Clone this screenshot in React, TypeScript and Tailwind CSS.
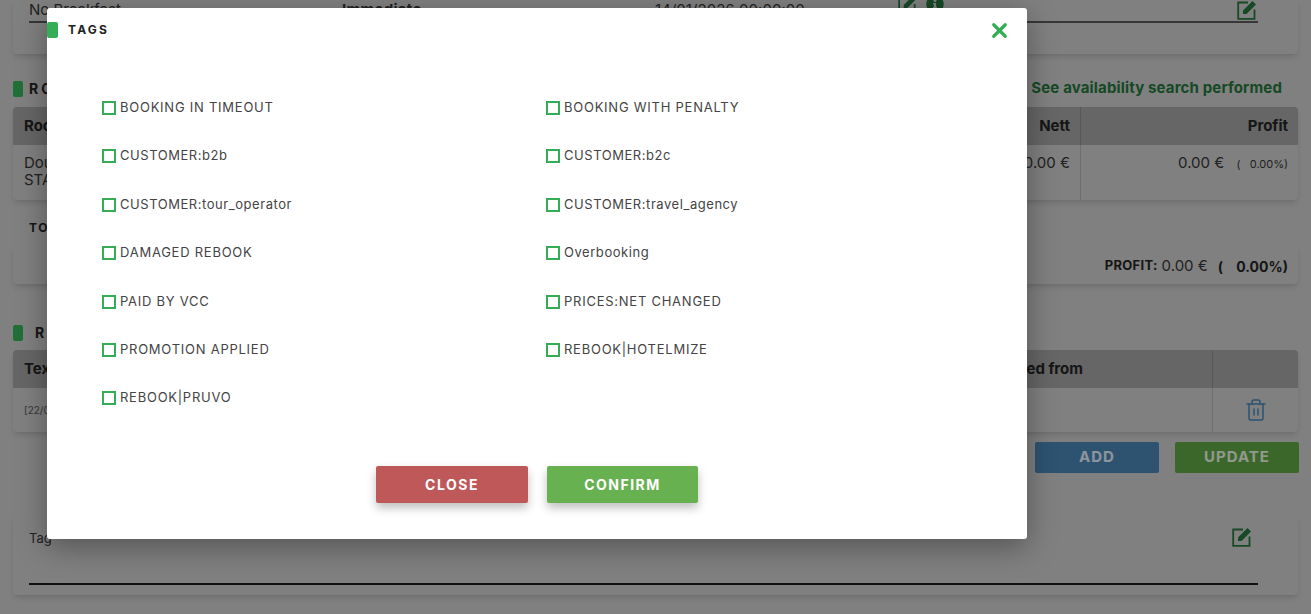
import { X, Trash2 } from "lucide-react";
import { FaInfoCircle } from "react-icons/fa";

const leftTags = [
  "BOOKING IN TIMEOUT",
  "CUSTOMER:b2b",
  "CUSTOMER:tour_operator",
  "DAMAGED REBOOK",
  "PAID BY VCC",
  "PROMOTION APPLIED",
  "REBOOK|PRUVO",
];

const rightTags = [
  "BOOKING WITH PENALTY",
  "CUSTOMER:b2c",
  "CUSTOMER:travel_agency",
  "Overbooking",
  "PRICES:NET CHANGED",
  "REBOOK|HOTELMIZE",
];

function EditIcon({ className }: { className: string }) {
  return (
    <svg viewBox="0 0 21 21" className={className} fill="none">
      <path d="M11 3.5H1.2V19.8H17.5V10.5" stroke="currentColor" strokeWidth="1.8" />
      <path d="M6 11.5 15.5 2 19 5.5 9.5 15H6Z" fill="currentColor" />
    </svg>
  );
}

function TagRow({ label }: { label: string }) {
  const upper = label === label.toUpperCase();
  return (
    <label className="flex h-[48.4px] items-start gap-1 pt-[1px]">
      <span className="mt-[1px] h-[14px] w-[14px] shrink-0 border-2 border-[#34ad56] bg-white" />
      <span className={`text-[13px] leading-[15px] text-[#444] ${upper ? "tracking-[0.75px]" : "tracking-[0.55px]"}`}>
        {label}
      </span>
    </label>
  );
}

function SectionTitle({ text, gap }: { text: string; gap: string }) {
  return (
    <div className={`flex h-[16px] items-center ${gap}`}>
      <span className="h-[16px] w-[10px] rounded-[2px] bg-[#34ad56]" />
      <span className="text-[14px] font-bold leading-[16px] tracking-[3px] text-[#222]">{text}</span>
    </div>
  );
}

export default function App() {
  return (
    <div className="relative h-[614px] w-[1311px] overflow-hidden bg-[#c5c5c5] font-['Inter',sans-serif]">
      <div className="flex flex-col pl-[13px] pr-[13px]">
        {/* no breakfast card, cut by the top of the window */}
        <div className="h-[54px] w-[1285px] rounded-b-[4px] bg-[#c5c5c5] px-4 shadow-md">
          <div className="relative flex h-[23px] w-[1229px] items-start border-b-2 border-[#555] text-[15px] leading-[18px] text-[#333]">
            <span className="mt-[1px] w-[313px]">No Breakfast</span>
            <span className="mt-[1px] w-[313px] font-bold tracking-[0.3px]">Immediate</span>
            <span className="mt-[1px] w-[243px] tracking-[0.05px]">14/01/2026 00:00:00</span>
            <EditIcon className="mt-[-6px] h-[20px] w-[20px] text-[#227038]" />
            <FaInfoCircle className="ml-2 mt-[-5px] h-[18px] w-[18px] text-[#227038]" />
            <EditIcon className="absolute right-0 top-[-1px] h-[21px] w-[21px] text-[#227038]" />
          </div>
        </div>

        <div className="mt-[27px] flex h-[16px] items-center justify-between pr-4">
          <SectionTitle text="ROOMS" gap="gap-[6px]" />
          <span className="-mt-[2px] text-[15px] font-bold tracking-[0.15px] text-[#227038]">
            See availability search performed
          </span>
        </div>

        <div className="mt-[10px] h-[93px] overflow-hidden rounded-[4px] bg-[#c5c5c5] text-[15px] text-[#333] shadow-md">
          <div className="flex h-[38px] items-center bg-[#9d9d9d] font-bold text-[#222]">
            <span className="flex-1 pl-[11px]">Room</span>
            <span className="pr-[10px]">Nett</span>
            <span className="flex h-full w-[218px] items-center justify-end border-l border-[#888] pr-[10px]">Profit</span>
          </div>
          <div className="flex h-[55px]">
            <div className="flex-1 pl-[11px] pt-[9px] leading-[17px]">
              Double
              <br />
              STANDARD
            </div>
            <span className="pr-[10px] pt-[9px] leading-[17px]">0.00 €</span>
            <div className="w-[218px] border-l border-[#aaa] pr-[10px] pt-[9px] text-right leading-[17px]">
              0.00 € <span className="ml-2 text-[11px]">( &nbsp; 0.00%)</span>
            </div>
          </div>
        </div>

        <span className="ml-4 mt-[20px] text-[12px] font-bold leading-[16px] tracking-[1.5px] text-[#222]">TOTALS</span>

        <div className="mt-[10px] flex h-[38px] items-center justify-end rounded-[4px] bg-[#c5c5c5] pr-[10px] pt-[2px] text-[15px] text-[#333] shadow-md">
          <span className="mr-1 text-[13px] font-bold tracking-[0.3px] text-[#222]">PROFIT:</span>
          0.00 €
          <span className="ml-[10px] text-[14px] font-bold text-[#222]">( &nbsp;&nbsp; 0.00%)</span>
        </div>

        <div className="mt-[41px]">
          <SectionTitle text="REMARKS" gap="gap-[12px]" />
        </div>

        <div className="mt-[9px] h-[82px] overflow-hidden rounded-[4px] bg-[#c5c5c5] text-[15px] shadow-md">
          <div className="flex h-[38px] items-center bg-[#9d9d9d] font-bold text-[#222]">
            <span className="flex-1 pl-[11px]">Text</span>
            <span className="pr-[129px]">Added from</span>
            <span className="h-full w-[86px] border-l border-[#888]" />
          </div>
          <div className="flex h-[44px]">
            <span className="flex-1 pl-[11px] pt-[15px] text-[10px] text-[#555]">[22/01/2026]</span>
            <div className="flex w-[86px] items-center justify-center border-l border-[#aaa]">
              <Trash2 className="h-[24px] w-[24px] text-[#3f7fb0]" strokeWidth={1.5} />
            </div>
          </div>
        </div>

        <div className="-mr-px mt-[10px] flex justify-end gap-4">
          <button className="h-[31px] w-[124px] rounded-[2px] bg-[#4580ae] text-[15px] font-bold tracking-[1px] text-white/80">
            ADD
          </button>
          <button className="h-[31px] w-[124px] rounded-[2px] bg-[#5c9e42] text-[15px] font-bold tracking-[1px] text-white/80">
            UPDATE
          </button>
        </div>

        <div className="mt-[42px] h-[80px] rounded-[4px] bg-[#c5c5c5] px-4 pt-[15px] shadow-md">
          <div className="flex h-[55px] w-[1229px] items-start justify-between border-b-2 border-[#1a1a1a]">
            <span className="-mt-[1px] text-[13px] text-[#333]">Tag</span>
            <EditIcon className="mr-[5px] mt-[-4px] h-[21px] w-[21px] text-[#227038]" />
          </div>
        </div>
      </div>

      {/* modal overlay */}
      <div className="absolute inset-0 bg-black/35" />
      <div className="absolute left-[47px] top-[8px] h-[531px] w-[980px] rounded-[3px] bg-white shadow-[0_8px_30px_rgba(0,0,0,0.35)]">
        <div className="flex h-[33px] items-center justify-between pr-[16px] pt-[11px]">
          <div className="flex items-center gap-[10px]">
            <span className="h-[16px] w-[11px] rounded-[2px] bg-[#34ad56]" />
            <span className="text-[12px] font-bold tracking-[2.2px] text-[#222]">TAGS</span>
          </div>
          <X className="h-[23px] w-[23px] text-[#34ad56]" strokeWidth={3.4} />
        </div>

        <div className="ml-[55px] mt-[58px] grid w-[888px] grid-cols-2">
          <div className="flex flex-col">
            {leftTags.map((t) => (
              <TagRow key={t} label={t} />
            ))}
          </div>
          <div className="flex flex-col">
            {rightTags.map((t) => (
              <TagRow key={t} label={t} />
            ))}
          </div>
        </div>

        <div className="mt-[28px] flex justify-center gap-[19px]">
          <button className="h-[37px] w-[152px] rounded-[2px] bg-[#bf5858] text-[14px] font-bold tracking-[1.5px] text-white shadow-[0_5px_10px_rgba(0,0,0,0.25)]">
            CLOSE
          </button>
          <button className="h-[37px] w-[151px] rounded-[2px] bg-[#68b151] text-[14px] font-bold tracking-[1.5px] text-white shadow-[0_5px_10px_rgba(0,0,0,0.25)]">
            CONFIRM
          </button>
        </div>
      </div>
    </div>
  );
}
